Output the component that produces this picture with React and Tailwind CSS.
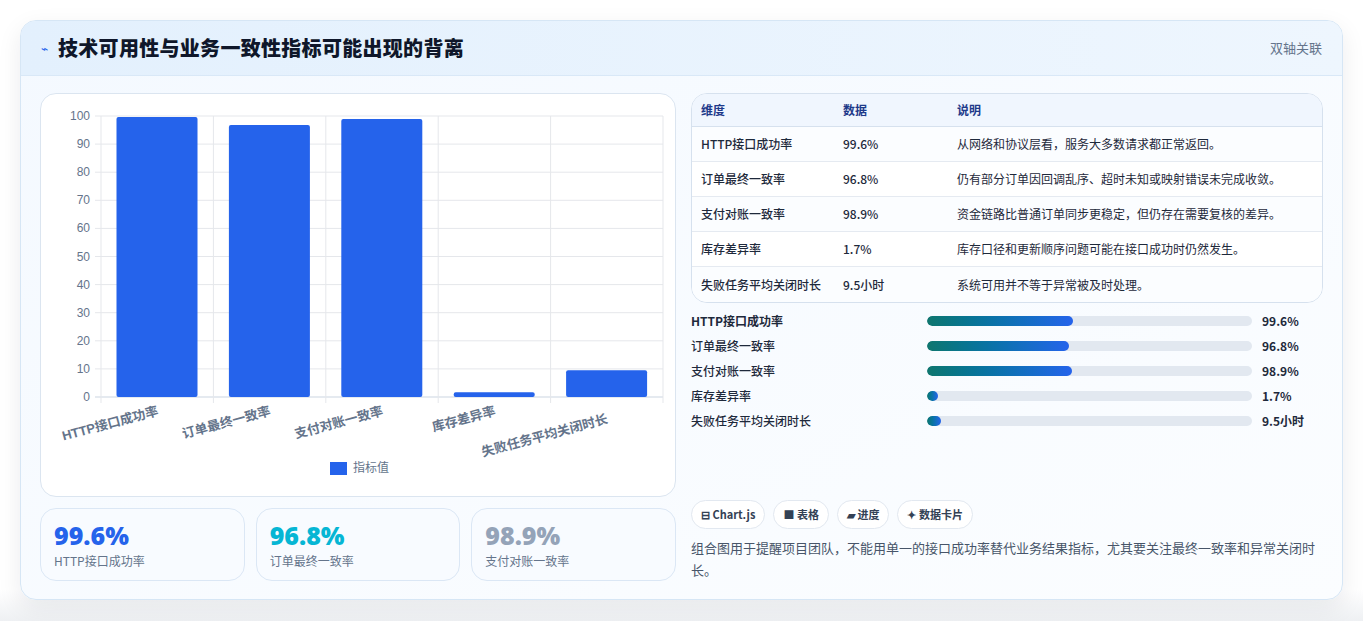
const rows = [
  ["HTTP接口成功率", "99.6%", "从网络和协议层看，服务大多数请求都正常返回。", 99.6],
  ["订单最终一致率", "96.8%", "仍有部分订单因回调乱序、超时未知或映射错误未完成收敛。", 96.8],
  ["支付对账一致率", "98.9%", "资金链路比普通订单同步更稳定，但仍存在需要复核的差异。", 98.9],
  ["库存差异率", "1.7%", "库存口径和更新顺序问题可能在接口成功时仍然发生。", 1.7],
  ["失败任务平均关闭时长", "9.5小时", "系统可用并不等于异常被及时处理。", 9.5],
];

const Chart = () => {
  const x0 = 60, x1 = 622, y0 = 22, y1 = 303;
  const cw = (x1 - x0) / 5;
  const h = (y1 - y0) / 100;
  return (
    <svg width="634" height="402" className="block" style={{ fontFamily: "'Liberation Sans','Noto Sans CJK SC',sans-serif" }}>
      {Array.from({ length: 11 }).map((_, i) => {
        const y = y1 - i * 10 * h;
        return (
          <g key={i}>
            <line x1={x0 - 6} x2={x1} y1={y} y2={y} stroke={i === 0 ? "#cbd5e1" : "#e5e7eb"} />
            <text x={x0 - 11} y={y + 4} fontSize="12" fill="#64748b" textAnchor="end">{i * 10}</text>
          </g>
        );
      })}
      {Array.from({ length: 6 }).map((_, i) => (
        <line key={i} x1={x0 + i * cw} x2={x0 + i * cw} y1={y0} y2={y1 + 6} stroke="#e5e7eb" />
      ))}
      {rows.map((r, i) => {
        const bh = r[3] * h;
        return <rect key={i} x={x0 + i * cw + 15.5} y={y1 - bh} width={81} height={bh} rx="2" fill="#2563eb" />;
      })}
      {rows.map((r, i) => (
        <text key={i} fontSize="13" fontWeight="600" fill="#64748b" textAnchor="end"
          transform={`translate(${x0 + i * cw + 58},${y1 + 18 + (i === 4 ? 8 : 0)}) rotate(-15)`}>{r[0]}</text>
      ))}
      <rect x="289" y="368" width="17" height="13" fill="#2563eb" />
      <text x="312" y="378" fontSize="12" fill="#64748b">指标值</text>
    </svg>
  );
};

export default function App() {
  return (
    <div className="min-h-[621px] pt-5 pb-5 px-5" style={{ fontFamily: "'Noto Sans CJK SC','Noto Sans',sans-serif", background: "linear-gradient(#ffffff 0%, #ffffff 95%, #eef0f3 100%)" }}>
      <div className="rounded-2xl border border-[#d6e6f5] bg-gradient-to-br from-[#f4f9ff] to-[#fbfdff] shadow-[0_8px_24px_rgba(15,23,42,0.08)] overflow-hidden">
        <div className="h-[55px] flex items-center justify-between px-5 bg-gradient-to-r from-[#e3f0fd] to-[#eef6fe] border-b border-[#d9e8f7]">
          <div className="flex items-center gap-2.5">
            <span className="text-[#2563eb] text-xs">⌁</span>
            <h2 className="text-[20px] font-black tracking-[0.3px] text-[#0f172a]">技术可用性与业务一致性指标可能出现的背离</h2>
          </div>
          <span className="text-[13px] text-[#64748b]">双轴关联</span>
        </div>
        <div className="flex gap-[15px] px-[19px] pt-[17px] pb-[18px]">
          <div className="w-[636px] flex flex-col gap-[11px]">
            <div className="h-[404px] rounded-2xl border border-[#dbe5f0] bg-white">
              <Chart />
            </div>
            <div className="grid grid-cols-3 gap-[11px]">
              {[["99.6%", "text-[#2563eb]", "HTTP接口成功率"], ["96.8%", "text-[#06b6d4]", "订单最终一致率"], ["98.9%", "text-[#94a3b8]", "支付对账一致率"]].map((c) => (
                <div key={c[0]} className="h-[73px] rounded-2xl border border-[#dbe7f5] bg-[#f8fbff] px-[13px] pt-[11px]">
                  <div className={`text-[25px] leading-[30px] font-extrabold ${c[1]}`} style={{ fontFamily: "'Open Sans','Noto Sans',sans-serif" }}>{c[0]}</div>
                  <div className="text-[12px] text-[#64748b] mt-[2px]">{c[2]}</div>
                </div>
              ))}
            </div>
          </div>
          <div className="flex-1 flex flex-col">
            <div className="rounded-2xl border border-[#d6e1ee] bg-white overflow-hidden text-[12px]">
              <div className="flex h-[33px] items-center bg-[#f0f6fe] border-b border-[#d6e1ee] text-[#1e3a8a] font-semibold">
                <div className="w-[151px] pl-[9px]">维度</div>
                <div className="w-[114px]">数据</div>
                <div>说明</div>
              </div>
              {rows.map((r, i) => (
                <div key={i} className={`flex h-[35px] items-center text-[#1e293b] ${i < 4 ? "border-b border-[#e5eaf1]" : ""} ${i % 2 ? "bg-white" : "bg-[#fbfdff]"}`}>
                  <div className="w-[151px] pl-[9px] font-medium">{r[0]}</div>
                  <div className="w-[114px] font-medium">{r[1]}</div>
                  <div>{r[2]}</div>
                </div>
              ))}
            </div>
            <div className="flex flex-col gap-[7px] mt-[9px]">
              {rows.map((r, i) => (
                <div key={i} className="flex items-center h-[18px] text-[12px] text-[#1e293b]">
                  <div className={`w-[236px] ${i === 0 ? "font-bold" : "font-medium"}`}>{r[0]}</div>
                  <div className="w-[325px] h-[10px] rounded-full bg-[#e2e8f0] overflow-hidden">
                    <div className="h-full rounded-full bg-gradient-to-r from-[#0f766e] to-[#2563eb]" style={{ width: Math.max(11, r[3] * 1.47) + "px" }} />
                  </div>
                  <div className="ml-[10px] font-bold">{r[1]}</div>
                </div>
              ))}
            </div>
            <div className="flex gap-[8px] mt-[70px]">
              {["⊟ Chart.js", "■ 表格", "▰ 进度", "✦ 数据卡片"].map((t) => (
                <span key={t} className="h-[29px] flex items-center px-[9px] rounded-full border border-[#e2e8f0] bg-white text-[11px] font-semibold text-[#334155]">{t}</span>
              ))}
            </div>
            <p className="mt-[8px] text-[13px] leading-[22px] text-[#475569] pr-2">组合图用于提醒项目团队，不能用单一的接口成功率替代业务结果指标，尤其要关注最终一致率和异常关闭时长。</p>
          </div>
        </div>
      </div>
    </div>
  );
}
